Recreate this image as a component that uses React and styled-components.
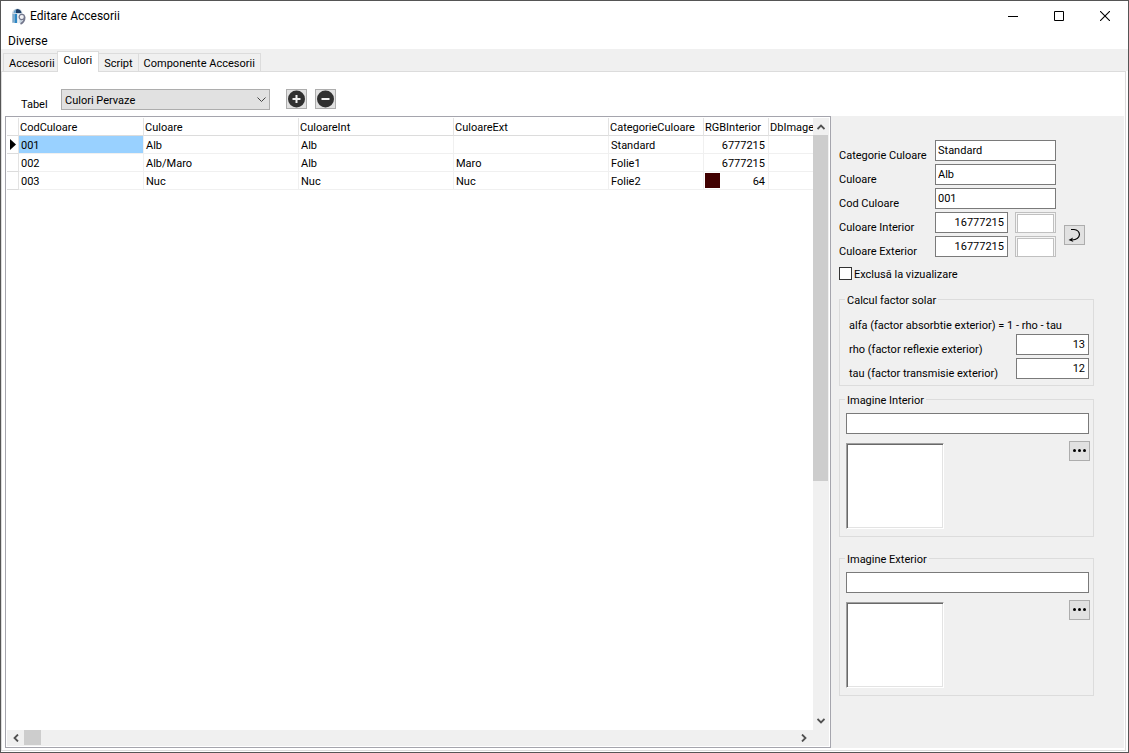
import React, { useState } from "react";
import styled, { createGlobalStyle } from "styled-components";

const GlobalStyle = createGlobalStyle`
  * {
    box-sizing: border-box;
  }
  body {
    margin: 0;
    background: #fff;
    color: #000;
    font-family: Tahoma, Roboto, sans-serif;
    font-size: 11px;
    line-height: 16px;
  }
  button, input, select {
    font: inherit;
    color: inherit;
    border-radius: 0;
    margin: 0;
  }
`;

const Window = styled.div`
  min-height: 100vh;
  display: flex;
  flex-direction: column;
  border: 1px solid #555;
  background: #fff;
`;

const TitleBar = styled.header`
  height: 30px;
  display: flex;
  align-items: center;
  gap: 4px;
  padding-left: 10px;
`;

const Title = styled.h1`
  flex: 1;
  margin: 0;
  font-size: 12px;
  font-weight: normal;
`;

const CaptionButtons = styled.div`
  display: flex;
`;

const CaptionButton = styled.button`
  width: 46px;
  height: 30px;
  padding: 0;
  border: 0;
  background: none;
  display: flex;
  align-items: center;
  justify-content: center;
  &:hover {
    background: #e5e5e5;
  }
`;

const MenuBar = styled.nav`
  height: 18px;
  display: flex;
  align-items: center;
`;

const MenuItem = styled.button`
  padding: 1px 7px 0;
  border: 0;
  background: none;
  font-size: 12px;
  line-height: 18px;
`;

const TabStrip = styled.div`
  height: 22px;
  display: flex;
  align-items: flex-end;
  padding-left: 2px;
  background: #f0f0f0;
`;

const Tab = styled.button`
  height: ${(p) => (p.$active ? 21 : 18)}px;
  margin: ${(p) => (p.$active ? "0 0 -1px -4px" : "0")};
  padding: ${(p) => (p.$active ? "0 6px 2px" : "2px 5px 0")};
  border: 1px solid #dcdcdc;
  border-bottom: 0;
  border-left-width: ${(p) => (p.$first || p.$active ? 1 : 0)}px;
  background: ${(p) => (p.$active ? "#fff" : "#f0f0f0")};
  z-index: ${(p) => (p.$active ? 1 : 0)};
`;

const Page = styled.main`
  flex: 1;
  display: flex;
  flex-direction: column;
  margin: 0 2px 1px 0;
  border: 1px solid #dcdcdc;
  padding: 0 1px 2px 3px;
`;

const Toolbar = styled.div`
  height: 44px;
  display: flex;
  align-items: flex-start;
  gap: 8px;
  padding: 17px 16px 0;
`;

const ToolbarLabel = styled.label`
  width: 32px;
  padding-top: 8px;
`;

const SelectBox = styled.div`
  position: relative;
  width: 209px;
  margin-right: 8px;
  svg {
    position: absolute;
    right: 4px;
    top: 7px;
    pointer-events: none;
  }
`;

const Select = styled.select`
  width: 100%;
  height: 21px;
  padding: 2px 3px 0;
  border: 1px solid #adadad;
  background: #e1e1e1;
  appearance: none;
`;

const SquareButton = styled.button`
  width: 21px;
  height: 20px;
  flex: none;
  padding: 0;
  border: 1px solid #adadad;
  background: #e1e1e1;
  display: flex;
  align-items: center;
  justify-content: center;
`;

const Body = styled.div`
  flex: 1;
  display: flex;
`;

const GridFrame = styled.section`
  flex: 1;
  min-width: 0;
  display: grid;
  grid-template-columns: minmax(0, 1fr) 16px;
  grid-template-rows: 1fr 16px;
  border: 1px solid #a5a5ad;
  padding: 1px;
`;

const GridView = styled.div`
  overflow: hidden;
`;

const Table = styled.table`
  width: 100%;
  table-layout: fixed;
  border-collapse: separate;
  border-spacing: 0;
  line-height: 14px;
`;

const HeadCell = styled.th`
  height: 18px;
  padding: 3px 0 0 1px;
  border-right: 1px solid #e3e3e3;
  border-bottom: 1px solid #dcdcdc;
  font-weight: normal;
  text-align: left;
  white-space: nowrap;
  overflow: hidden;
  &:last-child {
    border-right: 0;
  }
`;

const Cell = styled.td`
  position: relative;
  height: 18px;
  padding: 3px ${(p) => (p.$number ? 3 : 2)}px 0 2px;
  border-right: 1px solid #f0f0f0;
  border-bottom: 1px solid #f0f0f0;
  background: ${(p) => (p.$selected ? "#99d1ff" : "#fff")};
  text-align: ${(p) => (p.$number ? "right" : "left")};
  white-space: nowrap;
  overflow: hidden;
  &:last-child {
    border-right: 0;
  }
`;

const IndicatorCell = styled(HeadCell)`
  padding: 0 0 0 3px;
  svg {
    display: block;
  }
`;

const ColorChip = styled.span`
  position: absolute;
  left: 1px;
  top: 1px;
  width: 15px;
  height: 15px;
  background: ${(p) => p.$color};
`;

const ScrollBar = styled.div`
  display: flex;
  flex-direction: ${(p) => (p.$vertical ? "column" : "row")};
  padding: 0 1px 1px 0;
  background: #f0f0f0;
`;

const ScrollArrow = styled.button`
  width: ${(p) => (p.$vertical ? 15 : 17)}px;
  height: ${(p) => (p.$vertical ? 17 : 15)}px;
  flex: none;
  padding: 0;
  border: 0;
  background: none;
  display: flex;
  align-items: center;
  justify-content: center;
`;

const ScrollTrack = styled.div`
  flex: 1;
`;

const ScrollThumb = styled.div`
  width: ${(p) => p.$width};
  height: ${(p) => p.$height};
  background: #cdcdcd;
`;

const Corner = styled.div`
  background: #f0f0f0;
`;

const Details = styled.aside`
  width: 293px;
  padding: 24px 30px 0 8px;
  background: #f0f0f0;
`;

const FieldArea = styled.div`
  display: flex;
  align-items: flex-end;
  gap: 8px;
`;

const FieldRows = styled.div`
  display: flex;
  flex-direction: column;
  gap: 3px;
`;

const FieldRow = styled.div`
  display: flex;
  justify-content: space-between;
`;

const FieldLabel = styled.label`
  width: ${(p) => (p.$wide ? "auto" : "96px")};
  padding-top: 8px;
  height: 21px;
  line-height: 16px;
  white-space: nowrap;
`;

const TextInput = styled.input`
  width: ${(p) => p.$width || "100%"};
  height: 21px;
  padding: 0 ${(p) => (p.$number ? 3 : 2)}px;
  border: 1px solid #7a7a7a;
  background: #fff;
  text-align: ${(p) => (p.$number ? "right" : "left")};
  outline: none;
  &:focus {
    border-color: #0078d7;
  }
`;

const Swatch = styled.div`
  width: 41px;
  height: 21px;
  margin-left: 7px;
  padding: 1px;
  border: 1px solid #c0c0c0;
  background: #f5f5f5;
  &::before {
    content: "";
    display: block;
    height: 100%;
    border: 1px solid #c0c0c0;
    background: #fff;
  }
`;

const SwapSlot = styled.div`
  padding-bottom: 12px;
`;

const CheckLabel = styled.label`
  display: flex;
  align-items: flex-start;
  gap: 2px;
  margin-top: 10px;
`;

const CheckBox = styled.input`
  appearance: none;
  width: 13px;
  height: 13px;
  border: 1px solid #333;
  background: #fff;
  &:checked {
    box-shadow: inset 0 0 0 2px #fff;
    background: #333;
  }
`;

const Group = styled.fieldset`
  position: relative;
  min-width: 0;
  margin: ${(p) => p.$top}px 0 0;
  padding: 14px 4px 6px 6px;
  border: 1px solid #dcdcdc;
`;

const ImageFrame = styled(Group)`
  padding-top: 13px;
  padding-bottom: 7px;
`;

const Legend = styled.legend`
  float: left;
  position: absolute;
  left: 5px;
  top: -6px;
  padding: 0 2px;
  background: #f0f0f0;
  line-height: 14px;
`;

const SolarRows = styled(FieldRows)`
  padding: 0 0 0 3px;
`;

const Formula = styled.p`
  margin: 4px 0 -3px;
  line-height: 16px;
`;

const PreviewRow = styled.div`
  display: flex;
  justify-content: space-between;
  align-items: flex-start;
  margin: 7px -1px 0 0;
`;

const Preview = styled.div`
  width: 98px;
  height: 86px;
  margin-top: 2px;
  border: 1px solid;
  border-color: #a0a0a0 #fff #fff #a0a0a0;
  background: #fff;
  box-shadow: inset 1px 1px #696969, inset -1px -1px #e3e3e3;
`;

const columns = [
  { key: "cod", label: "CodCuloare", width: 125 },
  { key: "culoare", label: "Culoare", width: 155 },
  { key: "interior", label: "CuloareInt", width: 155 },
  { key: "exterior", label: "CuloareExt", width: 155 },
  { key: "categorie", label: "CategorieCuloare", width: 95 },
  { key: "rgb", label: "RGBInterior", width: 65 },
  { key: "image", label: "DbImage" },
];

const rows = [
  { cod: "001", culoare: "Alb", interior: "Alb", exterior: "", categorie: "Standard", rgb: 16777215 },
  { cod: "002", culoare: "Alb/Maro", interior: "Alb", exterior: "Maro", categorie: "Folie1", rgb: 16777215 },
  { cod: "003", culoare: "Nuc", interior: "Nuc", exterior: "Nuc", categorie: "Folie2", rgb: 64 },
];

const tabs = ["Accesorii", "Culori", "Script", "Componente Accesorii"];

// colours are stored as BGR integers
const toCss = (n) => `rgb(${n & 255}, ${(n >> 8) & 255}, ${(n >> 16) & 255})`;

const AppIcon = () => (
  <svg width="15" height="17" viewBox="0 0 15 17">
    <path d="M1 5.500Q1.500 1 6.500 0.500Q11 1 11.500 5.500V15H1Z" fill="#c9d6e2" />
    <path d="M3 5Q3.500 1.500 6.500 1Q10 1.500 10.500 5Z" fill="#1f3f66" />
    <path d="M3.500 2.500L5 1.500V5H2.500Z" fill="#6da6cf" />
    <path d="M1.500 6H3V14.500H1.500Z" fill="#7fa9c9" />
    <path d="M3.500 6H6V15H3.500Z" fill="#2d87c4" />
    <path d="M6.500 6H8.500V15.500H6.500Z" fill="#eef3f7" />
    <circle cx="10.800" cy="9" r="2.700" fill="#f2f2f6" stroke="#73778c" strokeWidth="1.200" />
    <path d="M13.600 8.500Q14.200 13.500 9.500 16" fill="none" stroke="#73778c" strokeWidth="1.600" />
  </svg>
);

const Chevron = ({ rotate = 0 }) => (
  <svg width="8" height="8" viewBox="0 0 8 8">
    <path d="M0.500 2L4 5.500L7.500 2" transform={`rotate(${rotate} 4 4)`} fill="none" stroke="#505050" strokeWidth="1.800" />
  </svg>
);

const RoundIcon = ({ plus }) => (
  <svg width="17" height="18" viewBox="0 0 17 18">
    <circle cx="8.500" cy="9" r="8.500" fill="#303030" />
    <path d={plus ? "M4.500 9H12.500M8.500 5V13" : "M4.500 9H12.500"} stroke="#f0f0f0" strokeWidth="2" />
  </svg>
);

const Dots = () => (
  <svg width="13" height="4" viewBox="0 0 13 4">
    <circle cx="1.500" cy="1.500" r="1.500" />
    <circle cx="6.500" cy="1.500" r="1.500" />
    <circle cx="11.500" cy="1.500" r="1.500" />
  </svg>
);

const ImageGroup = ({ title, top }) => (
  <ImageFrame $top={top}>
    <Legend>{title}</Legend>
    <TextInput aria-label={title} />
    <PreviewRow>
      <Preview />
      <SquareButton aria-label="Alege imagine">
        <Dots />
      </SquareButton>
    </PreviewRow>
  </ImageFrame>
);

const App = () => {
  const [tab, setTab] = useState("Culori");

  return (
    <>
      <GlobalStyle />
      <Window>
        <TitleBar>
          <AppIcon />
          <Title>Editare Accesorii</Title>
          <CaptionButtons>
            <CaptionButton aria-label="Minimize">
              <svg width="10" height="10"><path d="M0 5.500H10" stroke="#000" /></svg>
            </CaptionButton>
            <CaptionButton aria-label="Maximize">
              <svg width="10" height="10"><path d="M0.500 0.500H9.500V9.500H0.500Z" fill="none" stroke="#000" /></svg>
            </CaptionButton>
            <CaptionButton aria-label="Close">
              <svg width="10" height="10"><path d="M0 0L10 10M10 0L0 10" stroke="#000" strokeWidth="1.100" /></svg>
            </CaptionButton>
          </CaptionButtons>
        </TitleBar>
        <MenuBar>
          <MenuItem>Diverse</MenuItem>
        </MenuBar>
        <TabStrip role="tablist">
          {tabs.map((name, i) => (
            <Tab
              key={name}
              role="tab"
              aria-selected={name === tab}
              $active={name === tab}
              $first={i === 0}
              onClick={() => setTab(name)}
            >
              {name}
            </Tab>
          ))}
        </TabStrip>
        <Page>
          <Toolbar>
            <ToolbarLabel htmlFor="tabel">Tabel</ToolbarLabel>
            <SelectBox>
              <Select id="tabel">
                <option>Culori Pervaze</option>
              </Select>
              <svg width="9" height="7" viewBox="0 0 9 7">
                <path d="M0.500 1.500L4.500 5.500L8.500 1.500" fill="none" stroke="#444" />
              </svg>
            </SelectBox>
            <SquareButton aria-label="Adauga">
              <RoundIcon plus />
            </SquareButton>
            <SquareButton aria-label="Sterge">
              <RoundIcon />
            </SquareButton>
          </Toolbar>
          <Body>
            <GridFrame>
              <GridView>
                <Table>
                  <colgroup>
                    <col width={12} />
                    {columns.map((c) => (
                      <col key={c.key} width={c.width} />
                    ))}
                  </colgroup>
                  <thead>
                    <tr>
                      <HeadCell />
                      {columns.map((c) => (
                        <HeadCell key={c.key}>{c.label}</HeadCell>
                      ))}
                    </tr>
                  </thead>
                  <tbody>
                    {rows.map((row, i) => (
                      <tr key={row.cod}>
                        <IndicatorCell>
                          {i === 0 && (
                            <svg width="6" height="11"><path d="M0 0L6 5.500L0 11Z" /></svg>
                          )}
                        </IndicatorCell>
                        {columns.map((c) => (
                          <Cell key={c.key} $selected={i === 0 && c.key === "cod"} $number={c.key === "rgb"}>
                            {row[c.key]}
                            {c.key === "rgb" && <ColorChip $color={toCss(row.rgb)} />}
                          </Cell>
                        ))}
                      </tr>
                    ))}
                  </tbody>
                </Table>
              </GridView>
              <ScrollBar $vertical>
                <ScrollArrow $vertical aria-label="Sus"><Chevron rotate={180} /></ScrollArrow>
                <ScrollTrack>
                  <ScrollThumb $width="15px" $height="60%" />
                </ScrollTrack>
                <ScrollArrow $vertical aria-label="Jos"><Chevron /></ScrollArrow>
              </ScrollBar>
              <ScrollBar>
                <ScrollArrow aria-label="Stanga"><Chevron rotate={90} /></ScrollArrow>
                <ScrollTrack>
                  <ScrollThumb $width="17px" $height="15px" />
                </ScrollTrack>
                <ScrollArrow aria-label="Dreapta"><Chevron rotate={270} /></ScrollArrow>
              </ScrollBar>
              <Corner />
            </GridFrame>
            <Details>
              <FieldArea>
                <FieldRows>
                  <FieldRow>
                    <FieldLabel htmlFor="categorie">Categorie Culoare</FieldLabel>
                    <TextInput id="categorie" $width="121px" defaultValue="Standard" />
                  </FieldRow>
                  <FieldRow>
                    <FieldLabel htmlFor="culoare">Culoare</FieldLabel>
                    <TextInput id="culoare" $width="121px" defaultValue="Alb" />
                  </FieldRow>
                  <FieldRow>
                    <FieldLabel htmlFor="cod">Cod Culoare</FieldLabel>
                    <TextInput id="cod" $width="121px" defaultValue="001" />
                  </FieldRow>
                  <FieldRow>
                    <FieldLabel htmlFor="interior">Culoare Interior</FieldLabel>
                    <TextInput id="interior" $width="73px" $number defaultValue="16777215" />
                    <Swatch />
                  </FieldRow>
                  <FieldRow>
                    <FieldLabel htmlFor="exterior">Culoare Exterior</FieldLabel>
                    <TextInput id="exterior" $width="73px" $number defaultValue="16777215" />
                    <Swatch />
                  </FieldRow>
                </FieldRows>
                <SwapSlot>
                  <SquareButton aria-label="Copiaza culoarea">
                    <svg width="13" height="15" viewBox="0 0 13 15">
                      <path d="M3 1.500H6Q11 2 11.500 6.500Q11 11.500 4 12" fill="none" stroke="#000" strokeWidth="1.200" />
                      <path d="M0.500 12L5 9.500L4 12L5.500 14Z" />
                    </svg>
                  </SquareButton>
                </SwapSlot>
              </FieldArea>
              <CheckLabel>
                <CheckBox type="checkbox" />
                Exclusă la vizualizare
              </CheckLabel>
              <Group $top={16}>
                <Legend>Calcul factor solar</Legend>
                <SolarRows>
                  <Formula>alfa (factor absorbtie exterior) = 1 - rho - tau</Formula>
                  <FieldRow>
                    <FieldLabel $wide htmlFor="rho">rho (factor reflexie exterior)</FieldLabel>
                    <TextInput id="rho" $width="73px" $number defaultValue="13" />
                  </FieldRow>
                  <FieldRow>
                    <FieldLabel $wide htmlFor="tau">tau (factor transmisie exterior)</FieldLabel>
                    <TextInput id="tau" $width="73px" $number defaultValue="12" />
                  </FieldRow>
                </SolarRows>
              </Group>
              <ImageGroup title="Imagine Interior" top={13} />
              <ImageGroup title="Imagine Exterior" top={21} />
            </Details>
          </Body>
        </Page>
      </Window>
    </>
  );
};

export default App;
